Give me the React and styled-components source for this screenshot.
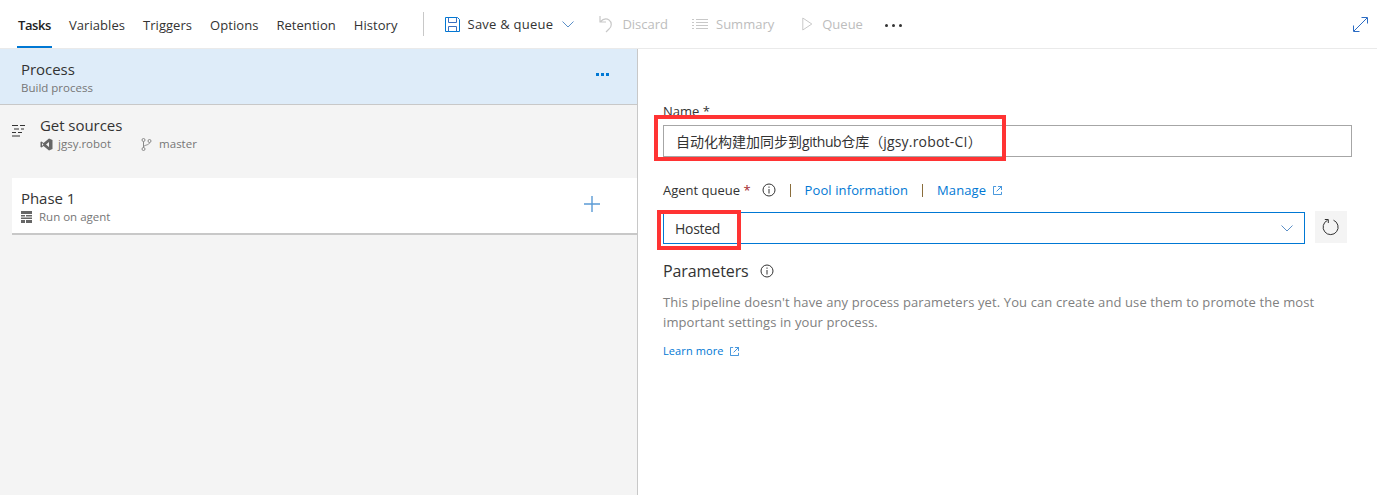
import React from 'react';
import styled, { createGlobalStyle } from 'styled-components';

const Global = createGlobalStyle`
  html, body { margin: 0; padding: 0; background: #fff; }
  body { font-family: "Open Sans", "Noto Sans CJK SC", sans-serif; color: #333; }
  * { box-sizing: border-box; }
`;
const Page = styled.div`width:1377px;height:495px;display:flex;flex-direction:column;overflow:hidden;`;
const Toolbar = styled.header`height:49px;flex:none;display:flex;align-items:center;border-bottom:1px solid #eaeaea;padding-left:17px;padding-right:9px;`;
const Tabs = styled.nav`display:flex;height:48px;gap:16px;`;
const Tab = styled.a`
  height:48px;padding:3px 1px 0;display:flex;align-items:center;font-size:13px;
  letter-spacing:${p => p.$active ? '-.4px' : '.05px'};
  color:${p => p.$active ? '#222' : '#333'};font-weight:${p => p.$active ? 600 : 400};
  border-bottom:2px solid ${p => p.$active ? '#0078d4' : 'transparent'};
`;
const Divider = styled.span`width:1px;height:24px;background:#c8c8c8;margin:0 21px 0 24px;`;
const Cmd = styled.button`
  border:0;background:none;padding:0;display:flex;align-items:center;font:inherit;font-size:13px;
  gap:${p => p.$gap || 9}px;margin-right:${p => p.$mr || 0}px;color:${p => p.$disabled ? '#bdbdbd' : '#333'};
`;
const SaveLabel = styled.span`letter-spacing:.25px;margin-right:1px;`;
const Dots = styled.span`display:flex;gap:4px;margin:2px 0 0 22px;i{width:3px;height:3px;background:#333;border-radius:50%;}`;
const Expand = styled.span`margin-left:auto;display:flex;`;
const Main = styled.main`flex:1;display:flex;min-height:0;`;
const LeftPane = styled.section`width:638px;flex:none;background:#f4f4f4;border-right:1px solid #c8c8c8;`;
const ProcessRow = styled.div`height:56px;background:#deecf9;border-bottom:1px solid #c8c8c8;padding:10px 28px 0 21px;display:flex;justify-content:space-between;`;
const Title = styled.div`font-size:15px;line-height:20px;letter-spacing:-.05px;color:#333;`;
const Sub = styled.div`font-size:11.5px;line-height:16px;margin-top:1px;color:#767676;display:flex;align-items:center;`;
const MoreDots = styled.span`display:flex;gap:2px;margin-top:14px;i{width:3px;height:3px;background:#0078d4;}`;
const SourceRow = styled.div`height:73px;padding:10px 0 0 11px;display:flex;gap:14px;`;
const SourceIcon = styled.span`display:flex;margin-top:9px;`;
const SubIcon = styled.span`display:flex;margin-right:${p => p.$mr || 5}px;margin-left:${p => p.$ml || 0}px;`;
const PhaseCard = styled.div`margin-left:12px;height:57px;background:#fff;border-bottom:2px solid #c8c8c8;padding:10px 37px 0 9px;display:flex;justify-content:space-between;`;
const Plus = styled.span`display:flex;margin-top:8px;`;
const RightPane = styled.section`flex:1;padding:53px 25px 0 25px;`;
const Label = styled.div`font-size:13px;line-height:18px;color:#333;`;
const Field = styled.div`position:relative;`;
const Input = styled.div`
  height:32px;border:1px solid #a6a6a6;padding-left:12px;display:flex;align-items:center;font-size:14px;margin-top:5px;color:#333;
`;
const Latin = styled.span`letter-spacing:-.45px;`;
const Handle = styled.span`letter-spacing:.2px;`;
const QueueHead = styled.div`display:flex;align-items:center;height:18px;margin-top:24px;font-size:13px;`;
const Star = styled.span`color:#a4262c;`;
const Sep = styled.span`width:1px;height:13px;background:#8a6d3b;margin:0 14px;`;
const Link = styled.a`color:#0078d4;display:inline-flex;align-items:center;letter-spacing:.1px;gap:${p => p.$gap || 6}px;font-size:${p => p.$size || 13}px;`;
const InfoGap = styled.span`width:${p => p.$w}px;`;
const QueueRow = styled.div`display:flex;gap:10px;margin-top:12px;align-items:flex-start;`;
const Select = styled.div`
  height:32px;border:1px solid #0078d4;margin-top:1px;padding:0 11px;display:flex;align-items:center;justify-content:space-between;
  font-size:14px;letter-spacing:-.3px;color:#333;
`;
const SelectField = styled(Field)`flex:1;`;
const Refresh = styled.span`width:32px;height:32px;background:#f4f4f4;display:flex;align-items:center;justify-content:center;margin-right:5px;`;
const ParamHead = styled.div`display:flex;align-items:center;gap:11px;font-size:16px;letter-spacing:-.1px;margin-top:16px;line-height:22px;color:#333;`;
const Help = styled.p`margin:10px 0 0;font-size:13px;line-height:20px;letter-spacing:.11px;color:#808080;width:680px;`;
const More = styled.div`margin-top:9px;line-height:16px;`;
const RedBox = styled.span`position:absolute;border:4px solid #f33;pointer-events:none;left:${p => p.$l}px;top:${p => p.$t}px;width:${p => p.$w}px;height:${p => p.$h}px;`;

const Info = ({ s = 14 }) => (
  <svg width={s} height={s} viewBox="0 0 14 14" fill="none" stroke="#333"><circle cx="7" cy="7" r="6"/><path d="M7 6v4.5M7 3.5v1.3"/></svg>
);
const Ext = () => (
  <svg width="9" height="9" viewBox="0 0 10 10" fill="none" stroke="#2b88d8"><path d="M3.5.5H.5v9h9v-3M5.5.5h4v4M9.5.5L4 6"/></svg>
);

export default function App() {
  return (
    <Page>
      <Global />
      <Toolbar>
        <Tabs>
          <Tab $active>Tasks</Tab><Tab>Variables</Tab><Tab>Triggers</Tab><Tab>Options</Tab><Tab>Retention</Tab><Tab>History</Tab>
        </Tabs>
        <Divider />
        <Cmd $mr={25} $gap={8}>
          <svg width="15" height="15" viewBox="0 0 15 15" fill="none" stroke="#0078d4"><path d="M.5.5h12l2 2v12H.5z"/><path d="M3.5.5v5h8v-5M3.5 14.500v-5h8v5" stroke="#3a6fc0"/></svg>
          <SaveLabel>Save &amp; queue</SaveLabel>
          <svg width="12" height="7" viewBox="0 0 12 7" fill="none" stroke="#5b8fc7"><path d="M.5.5L6 6 11.5.5"/></svg>
        </Cmd>
        <Cmd $disabled $mr={24}>
          <svg width="14" height="18" viewBox="0 0 14 18" fill="none" stroke="#c8c8c8" strokeWidth="1.2"><path d="M1 1v6h6M1 7c3-3 6-4 9-2s3 7 0 9l-3 3"/></svg>
          Discard
        </Cmd>
        <Cmd $disabled $gap={8} $mr={28}>
          <svg width="16" height="12" viewBox="0 0 16 12" fill="none" stroke="#c8c8c8"><path d="M0 1.5h2M4 1.5h12M0 4.500h2M4 4.500h12M0 7.500h2M4 7.500h12M0 10.500h2M4 10.500h12"/></svg>
          Summary
        </Cmd>
        <Cmd $disabled>
          <svg width="11" height="14" viewBox="0 0 11 14" fill="none" stroke="#c8c8c8"><path d="M.8 1l9 6-9 6z"/></svg>
          Queue
        </Cmd>
        <Dots><i /><i /><i /></Dots>
        <Expand>
          <svg width="15" height="15" viewBox="0 0 15 15" fill="none" stroke="#2b6cc4"><path d="M14 1L1 14M8.500.5h6v6M.5 8.500v6h6"/></svg>
        </Expand>
      </Toolbar>
      <Main>
        <LeftPane>
          <ProcessRow>
            <div><Title>Process</Title><Sub>Build process</Sub></div>
            <MoreDots><i /><i /><i /></MoreDots>
          </ProcessRow>
          <SourceRow>
            <SourceIcon>
              <svg width="15" height="13" viewBox="0 0 15 13" fill="none" stroke="#333"><path d="M1 1.500h6M9 1.500h5M3 5h5M10 5h3M1 8.500h4M7 8.500h4M1 12h8"/></svg>
            </SourceIcon>
            <div>
              <Title>Get sources</Title>
              <Sub>
                <SubIcon>
                  <svg width="13" height="13" viewBox="0 0 13 13" fill="#666"><path d="M9 .5l3.500 1.500v9L9 12.500 3.500 8 1.500 9.500.5 9V4l1-.5 2 1.500zM9 4L6 6.500 9 9zM2 5v3l1.500-1.500z" fillRule="evenodd"/></svg>
                </SubIcon>
                jgsy.robot
                <SubIcon $ml={30} $mr={7}>
                  <svg width="11" height="13" viewBox="0 0 11 13" fill="none" stroke="#888"><circle cx="2.500" cy="2" r="1.500"/><circle cx="2.500" cy="11" r="1.500"/><circle cx="8.500" cy="3" r="1.500"/><path d="M2.500 3.500v6M8.500 4.500c0 3-6 2-6 5"/></svg>
                </SubIcon>
                master
              </Sub>
            </div>
          </SourceRow>
          <PhaseCard>
            <div>
              <Title>Phase 1</Title>
              <Sub>
                <SubIcon $mr={7}>
                  <svg width="11" height="12" viewBox="0 0 11 12" fill="#666"><path d="M0 0h11v3H0zM0 4h4v1.500H0zM5 4h6v1.500H5zM0 6.500h11V8H0zM0 9h4v3H0zM5 9h6v3H5z"/></svg>
                </SubIcon>
                Run on agent
              </Sub>
            </div>
            <Plus>
              <svg width="16" height="16" viewBox="0 0 16 16" stroke="#5b9bd5" strokeWidth="1.4"><path d="M8 0v16M0 8h16"/></svg>
            </Plus>
          </PhaseCard>
        </LeftPane>
        <RightPane>
          <Label>Name *</Label>
          <Field>
            <Input>自动化构建加同步到<Latin>github</Latin>仓库（<Handle>jgsy.robot-CI</Handle>）</Input>
            <RedBox $l={-9} $t={-10} $w={352} $h={46} />
          </Field>
          <QueueHead>
            Agent queue&nbsp;<Star>*</Star>
            <InfoGap $w={11} /><Info />
            <Sep />
            <Link>Pool information</Link>
            <Sep />
            <Link $gap={7}>Manage <Ext /></Link>
          </QueueHead>
          <QueueRow>
            <SelectField>
              <Select>
                Hosted
                <svg width="12" height="7" viewBox="0 0 12 7" fill="none" stroke="#5b8fc7"><path d="M.5.5L6 6 11.5.5"/></svg>
              </Select>
              <RedBox $l={-6} $t={-1} $w={84} $h={40} />
            </SelectField>
            <Refresh>
              <svg width="18" height="18" viewBox="0 0 18 18" fill="none" stroke="#333"><path d="M11.500 2.200A7.500 7.500 0 1 1 5.500 2.300M2.800 1.500h3.500v3.500"/></svg>
            </Refresh>
          </QueueRow>
          <ParamHead>Parameters <Info /></ParamHead>
          <Help>This pipeline doesn't have any process parameters yet. You can create and use them to promote the most important settings in your process.</Help>
          <More><Link $size={11}>Learn more <Ext /></Link></More>
        </RightPane>
      </Main>
    </Page>
  );
}
